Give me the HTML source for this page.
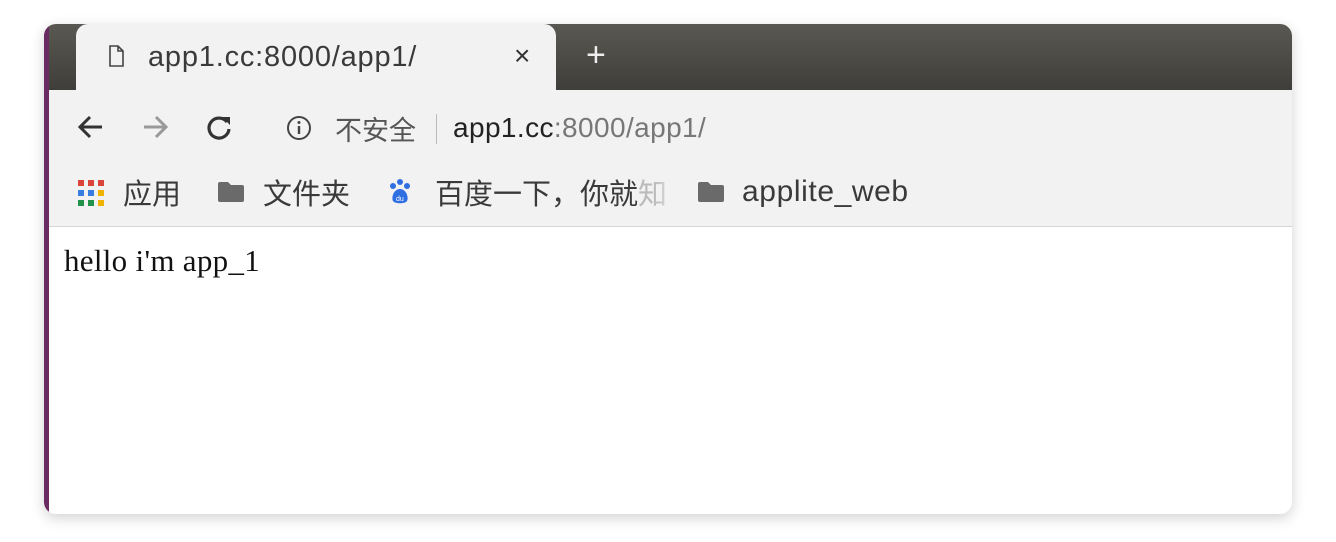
<!DOCTYPE html>
<html><head><meta charset="utf-8"><style>
html,body{margin:0;padding:0;width:1336px;height:542px;background:#fff;overflow:hidden;font-family:"Liberation Sans","Noto Sans CJK SC",sans-serif}
.win{position:absolute;left:44px;top:24px;width:1248px;height:490px;border-radius:12px;overflow:hidden;background:#fff;box-shadow:0 4px 14px rgba(0,0,0,.18)}
.title{position:absolute;left:0;top:0;width:100%;height:66px;background:linear-gradient(#5a5852,#403e3a)}
.stripe{position:absolute;left:0;top:0;width:5px;height:490px;background:#6a2a62}
.tab{position:absolute;left:32px;top:0;width:480px;height:68px;background:#f2f2f2;border-radius:12px 12px 0 0}
.tbar{position:absolute;left:5px;top:66px;right:0;height:136px;background:#f2f2f2;border-bottom:1px solid #d6d6d6}
.t{position:absolute;white-space:nowrap;color:#3c3c3c}
</style></head><body>
<div class="win">
<div class="title"></div>
<div class="tab"></div>
<div class="stripe"></div>
<div class="tbar"></div>
<svg style="position:absolute;left:64px;top:21px" width="16" height="22" viewBox="0 0 16 22"><path d="M2 1h8l5 5v15H2z M10 1v5h5" fill="none" stroke="#444" stroke-width="1.6"/></svg>
<div class="t" style="left:104px;top:17px;font-size:29px;letter-spacing:0.8px;color:#3a3a3a">app1.cc:8000/app1/</div>
<div class="t" style="left:470px;top:16px;font-size:28px;color:#333">×</div>
<div class="t" style="left:542px;top:12px;font-size:34px;color:#eee">+</div>
<svg style="position:absolute;left:32px;top:88px" width="30" height="30" viewBox="0 0 30 30"><path d="M26 15H5M14 5L4 15l10 10" fill="none" stroke="#333" stroke-width="3"/></svg>
<svg style="position:absolute;left:96px;top:88px" width="30" height="30" viewBox="0 0 30 30"><path d="M4 15h21M16 5l10 10-10 10" fill="none" stroke="#999" stroke-width="3"/></svg>
<svg style="position:absolute;left:160px;top:88px" width="30" height="30" viewBox="0 0 30 30"><path d="M23 10A10 10 0 1 0 25 17" fill="none" stroke="#333" stroke-width="3.2"/><path d="M18 5h8v8z" fill="#333"/></svg>
<svg style="position:absolute;left:242px;top:91px" width="26" height="26" viewBox="0 0 26 26"><circle cx="13" cy="13" r="11" fill="none" stroke="#444" stroke-width="2"/><path d="M13 11v8" stroke="#444" stroke-width="2.4"/><circle cx="13" cy="7.5" r="1.5" fill="#444"/></svg>
<div class="t" style="left:291px;top:85px;font-size:27px;color:#555">不安全</div>
<div style="position:absolute;left:392px;top:90px;width:1px;height:30px;background:#bbb"></div>
<div class="t" style="left:409px;top:88px;font-size:28px;letter-spacing:0.4px;color:#222">app1.cc<span style="color:#777">:8000/app1/</span></div>
<svg style="position:absolute;left:33px;top:155px" width="28" height="28" viewBox="0 0 28 28">
<rect x="1" y="1" width="6" height="6" fill="#d9453b"/><rect x="11" y="1" width="6" height="6" fill="#d9453b"/><rect x="21" y="1" width="6" height="6" fill="#d9453b"/>
<rect x="1" y="11" width="6" height="6" fill="#3a7de0"/><rect x="11" y="11" width="6" height="6" fill="#3a7de0"/><rect x="21" y="11" width="6" height="6" fill="#f0b400"/>
<rect x="1" y="21" width="6" height="6" fill="#22914a"/><rect x="11" y="21" width="6" height="6" fill="#22914a"/><rect x="21" y="21" width="6" height="6" fill="#f0b400"/></svg>
<div class="t" style="left:79px;top:147px;font-size:29px;color:#3a3a3a">应用</div>
<svg style="position:absolute;left:173px;top:157px" width="28" height="22" viewBox="0 0 28 22"><path d="M1 3a2 2 0 0 1 2-2h8l3 3h11a2 2 0 0 1 2 2v13a2 2 0 0 1-2 2H3a2 2 0 0 1-2-2z" fill="#6a6a6a"/></svg>
<div class="t" style="left:219px;top:147px;font-size:29px;color:#3a3a3a">文件夹</div>
<svg style="position:absolute;left:343px;top:154px" width="26" height="28" viewBox="0 0 26 28"><circle cx="6" cy="8" r="3" fill="#2f6ee0"/><circle cx="13" cy="4" r="3" fill="#2f6ee0"/><circle cx="20" cy="8" r="3" fill="#2f6ee0"/><path d="M13 11c-6 0-9 8-7 12 2 3 12 3 14 0 2-4-1-12-7-12z" fill="#2f6ee0"/><text x="9" y="23" font-size="7" fill="#fff" font-family="Liberation Sans">du</text></svg>
<div class="t" style="left:391px;top:147px;font-size:29px;color:#3a3a3a">百度一下，你就<span style="color:#bbb">知</span></div>
<div style="position:absolute;left:610px;top:145px;width:35px;height:44px;background:linear-gradient(90deg,rgba(242,242,242,0),#f2f2f2 80%)"></div>
<svg style="position:absolute;left:653px;top:157px" width="28" height="22" viewBox="0 0 28 22"><path d="M1 3a2 2 0 0 1 2-2h8l3 3h11a2 2 0 0 1 2 2v13a2 2 0 0 1-2 2H3a2 2 0 0 1-2-2z" fill="#6a6a6a"/></svg>
<div class="t" style="left:698px;top:151px;font-size:30px;letter-spacing:0.6px;color:#3a3a3a">applite_web</div>
<div class="t" style="left:20px;top:219px;font-size:31px;letter-spacing:0.3px;color:#111;font-family:'Liberation Serif',serif">hello i'm app_1</div>
</div>
</body></html>
